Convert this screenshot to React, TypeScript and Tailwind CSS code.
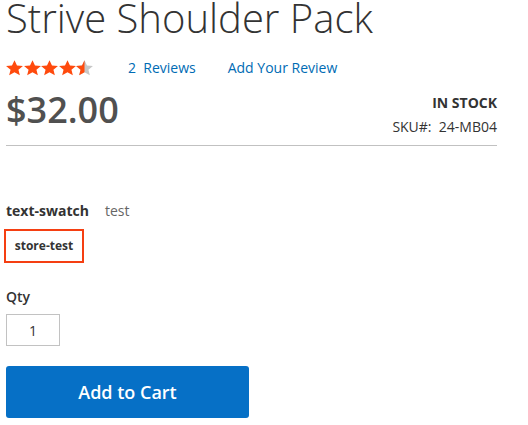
import React from 'react'

function Star({ fill }: { fill: 'full' | 'half' | 'empty' }) {
  const d = 'M8 0.3l2.35 5.1 5.6 0.5-4.25 3.75 1.35 5.55L8 12.3 2.95 15.2l1.35-5.55L0.05 5.9l5.6-0.5z'
  return (
    <svg width="17" height="16" viewBox="0 0 16 16" preserveAspectRatio="none" className="shrink-0">
      <defs>
        <clipPath id="half-left">
          <rect x="0" y="0" width="8" height="16" />
        </clipPath>
      </defs>
      <path d={d} fill={fill === 'full' ? '#ff4a0d' : '#c7c7c7'} />
      {fill === 'half' && <path d={d} fill="#ff4a0d" clipPath="url(#half-left)" />}
    </svg>
  )
}

export default function App() {
  return (
    <div className="w-[528px] h-[425px] bg-white text-[#333] pl-[6px] pr-[31px] font-['Open_Sans',sans-serif] overflow-hidden">
      {/* Title */}
      <h1 className="text-[40px] leading-[36px] font-light whitespace-nowrap">Strive Shoulder Pack</h1>

      {/* Rating */}
      <div className="mt-[22px] flex items-center h-[20px] text-[14px] leading-[20px]">
        <div className="flex items-center gap-[0.5px] w-[88px]">
          <Star fill="full" />
          <Star fill="full" />
          <Star fill="full" />
          <Star fill="full" />
          <Star fill="half" />
        </div>
        <a className="ml-[34px] text-[#006bb4]">2&nbsp; Reviews</a>
        <a className="ml-[32px] text-[#006bb4]">Add Your Review</a>
      </div>

      {/* Price + stock */}
      <div className="mt-[14px] h-[54px] flex justify-between items-start border-b border-[#c1c1c1]">
        <div className="text-[36px] leading-[36px] font-semibold text-[#505050]">$32.00</div>
        <div className="mt-[1px] text-right text-[14px] leading-[20px]">
          <div className="font-bold uppercase">In stock</div>
          <div className="mt-[4px]">SKU#:&nbsp; 24-MB04</div>
        </div>
      </div>

      {/* Swatch */}
      <div className="mt-[55px] text-[14px] leading-[20px] flex">
        <span className="font-bold">text-swatch</span>
        <span className="ml-[16px] text-[#666]">test</span>
      </div>
      <div className="mt-[8px] ml-[-2px] w-[80px] h-[34px] border-2 border-[#f53f12] flex items-center justify-center text-[12px] font-bold">
        store-test
      </div>

      {/* Qty */}
      <div className="mt-[24px] text-[14px] leading-[20px] font-semibold">Qty</div>
      <div className="mt-[7px] w-[54px] h-[32px] border border-[#c2c2c2] flex items-center justify-center text-[14px]">
        1
      </div>

      {/* Add to cart */}
      <button className="mt-[20px] w-[243px] h-[52px] rounded-[3px] bg-[#0670c6] text-white text-[18px] font-semibold flex items-center justify-center">
        Add to Cart
      </button>
    </div>
  )
}
